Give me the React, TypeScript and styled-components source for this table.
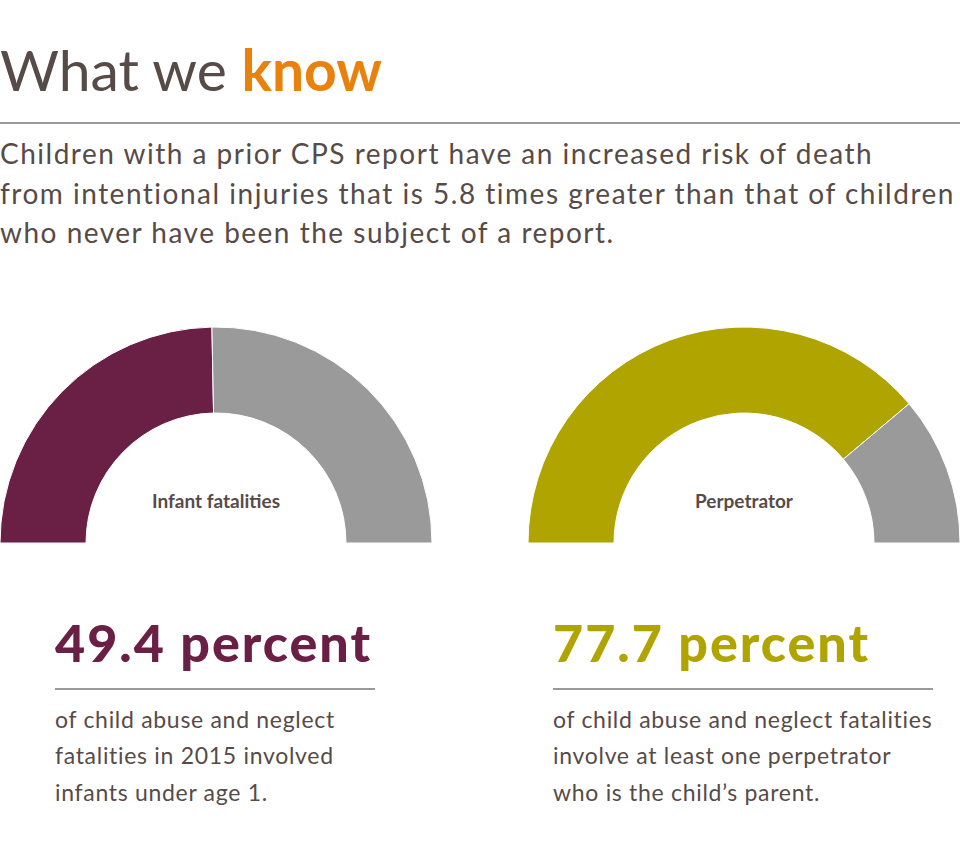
import styled, { createGlobalStyle } from 'styled-components';

const GlobalStyle = createGlobalStyle`
  html, body {
    margin: 0;
    padding: 0;
    background: #ffffff;
  }
  body {
    font-family: Lato, "Open Sans", sans-serif;
    color: #574b48;
  }
`;

const Page = styled.main`
  width: 960px;
  overflow: hidden;
`;

const Title = styled.h1`
  margin: 0;
  padding: 41px 0 24px 0;
  font-size: 57px;
  font-weight: 400;
  line-height: 1;
  color: #574b48;
  border-bottom: 2px solid #9a9a9a;
`;

const Accent = styled.span`
  color: #e8820c;
  font-weight: 700;
`;

const Intro = styled.p`
  margin: 0;
  padding-top: 10px;
  font-size: 28px;
  letter-spacing: 1.5px;
  line-height: 39.5px;
  white-space: nowrap;
`;

const Line = styled.span`
  display: block;
`;

const Gauges = styled.section`
  display: flex;
  gap: 96px;
  margin-top: 73px;
`;

const GaugeSvg = styled.svg`
  display: block;
  width: 432px;
  height: 218px;
`;

const GaugeLabel = styled.text`
  font-family: Lato, sans-serif;
  font-weight: 700;
  font-size: 19px;
  fill: #574b48;
`;

const Stats = styled.section`
  display: grid;
  grid-template-columns: 320px 380px;
  column-gap: 178px;
  padding-left: 55px;
  margin-top: 72px;
`;

const Stat = styled.div`
  display: flex;
  flex-direction: column;
`;

const Figure = styled.div<{ $color: string }>`
  font-size: 52px;
  font-weight: 900;
  letter-spacing: 2px;
  line-height: 1;
  color: ${(p) => p.$color};
  padding-bottom: 20px;
  border-bottom: 2px solid #9a9a9a;
  white-space: nowrap;
`;

const Caption = styled.p`
  margin: 0;
  padding-top: 11px;
  font-size: 23px;
  letter-spacing: 0.7px;
  line-height: 36.5px;
  white-space: nowrap;
`;

const R = 216;
const r = 130;
const CX = 216;
const CY = 217;

const pt = (rad: number, f: number) => {
  const a = Math.PI * f;
  return `${(CX - rad * Math.cos(a)).toFixed(2)} ${(CY - rad * Math.sin(a)).toFixed(2)}`;
};

const arc = (from: number, to: number) =>
  `M ${pt(R, from)} A ${R} ${R} 0 0 1 ${pt(R, to)} L ${pt(r, to)} A ${r} ${r} 0 0 0 ${pt(r, from)} Z`;

const Gauge = ({ value, color, label }: { value: number; color: string; label: string }) => (
  <GaugeSvg viewBox="0 0 432 218">
    <path d={arc(0, value)} fill={color} stroke="#fff" strokeWidth={1} />
    <path d={arc(value, 1)} fill="#9a9a9a" stroke="#fff" strokeWidth={1} />
    <GaugeLabel x={CX} y={182} textAnchor="middle">
      {label}
    </GaugeLabel>
  </GaugeSvg>
);

const App = () => (
  <Page>
    <GlobalStyle />
    <Title>
      What we <Accent>know</Accent>
    </Title>
    <Intro>
      <Line>Children with a prior CPS report have an increased risk of death</Line>
      <Line>from intentional injuries that is 5.8 times greater than that of children</Line>
      <Line>who never have been the subject of a report.</Line>
    </Intro>
    <Gauges>
      <Gauge value={0.494} color="#6a2045" label="Infant fatalities" />
      <Gauge value={0.777} color="#b0a500" label="Perpetrator" />
    </Gauges>
    <Stats>
      <Stat>
        <Figure $color="#6a2045">49.4 percent</Figure>
        <Caption>
          of child abuse and neglect
          <br />
          fatalities in 2015 involved
          <br />
          infants under age 1.
        </Caption>
      </Stat>
      <Stat>
        <Figure $color="#b0a500">77.7 percent</Figure>
        <Caption>
          of child abuse and neglect fatalities
          <br />
          involve at least one perpetrator
          <br />
          who is the child’s parent.
        </Caption>
      </Stat>
    </Stats>
  </Page>
);

export default App;
